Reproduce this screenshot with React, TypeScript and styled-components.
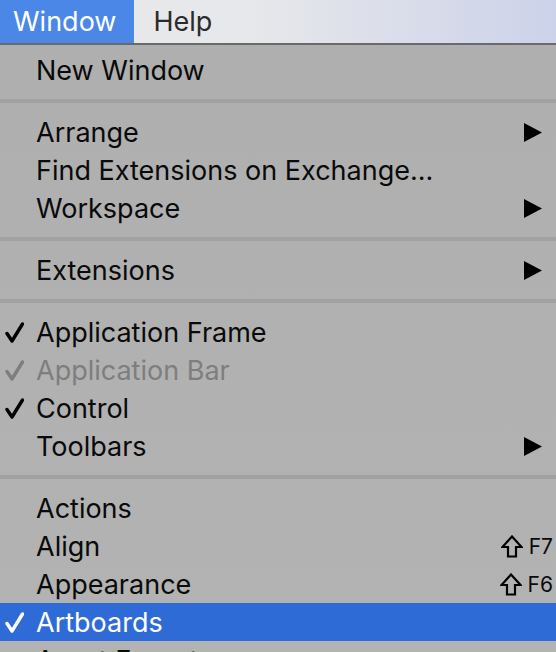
import React from "react";
import styled, { createGlobalStyle } from "styled-components";

const Global = createGlobalStyle`
  html, body { margin: 0; padding: 0; background: #b1b1b1; }
  body { font-family: Inter, "Noto Sans", "Liberation Sans", sans-serif; -webkit-font-smoothing: antialiased; }
`;

const Page = styled.div`
  width: 556px;
  height: 652px;
  overflow: hidden;
  background: #b1b1b1;
`;

const MenuBar = styled.div`
  display: flex;
  height: 43px;
  background: linear-gradient(to right, #e9e9eb 0%, #e7e8eb 45%, #ccd2e9 100%);
  border-bottom: 2px solid #6a6a6a;
`;

const BarItem = styled.div<{ $active?: boolean }>`
  display: flex;
  align-items: center;
  padding: 0 18px 0 19px;
  font-size: 27px;
  color: ${(p) => (p.$active ? "#ffffff" : "#2b2b2b")};
  background: ${(p) => (p.$active ? "#4a87e7" : "transparent")};
  &:first-child { padding-left: 13px; }
`;

const Menu = styled.div`
  display: flex;
  flex-direction: column;
  padding-top: 6px;
  background: linear-gradient(to bottom, #afafaf, #b3b3b3);
`;

const Row = styled.div<{ $selected?: boolean; $disabled?: boolean }>`
  display: grid;
  grid-template-columns: 36px 1fr auto;
  align-items: center;
  height: 38px;
  padding-right: 3px;
  font-size: 27px;
  color: ${(p) => (p.$selected ? "#ffffff" : p.$disabled ? "#7e7e7e" : "#0a0a0a")};
  background: ${(p) => (p.$selected ? "#2e6bd6" : "transparent")};
  white-space: nowrap;
`;

const CheckCell = styled.div`
  display: flex;
  align-items: center;
  justify-content: flex-start;
  padding-left: 5px;
`;

const Label = styled.span``;

const Separator = styled.div`
  height: 4px;
  margin: 10px 0;
  background: #a1a1a1;
`;

const Accessory = styled.div`
  display: flex;
  align-items: center;
  gap: 6px;
  font-size: 21px;
`;

const SubArrow = styled.svg`
  margin-right: 11px;
`;

const Check = ({ color }: { color: string }) => (
  <svg width="19" height="21" viewBox="0 0 19 21">
    <path
      d="M2 11.5 L7 19 L17.5 2"
      fill="none"
      stroke={color}
      strokeWidth="3.4"
      strokeLinecap="round"
      strokeLinejoin="round"
    />
  </svg>
);

const Shift = () => (
  <svg width="22" height="23" viewBox="0 0 22 23">
    <path
      d="M11 1.5 L20.5 12 L15 12 L15 21.5 L7 21.5 L7 12 L1.5 12 Z"
      fill="none"
      stroke="#000"
      strokeWidth="2.2"
      strokeLinejoin="miter"
    />
  </svg>
);

type Item =
  | { sep: true }
  | {
      sep?: false;
      label: string;
      checked?: boolean;
      disabled?: boolean;
      selected?: boolean;
      submenu?: boolean;
      shortcut?: string;
    };

const items: Item[] = [
  { label: "New Window" },
  { sep: true },
  { label: "Arrange", submenu: true },
  { label: "Find Extensions on Exchange..." },
  { label: "Workspace", submenu: true },
  { sep: true },
  { label: "Extensions", submenu: true },
  { sep: true },
  { label: "Application Frame", checked: true },
  { label: "Application Bar", checked: true, disabled: true },
  { label: "Control", checked: true },
  { label: "Toolbars", submenu: true },
  { sep: true },
  { label: "Actions" },
  { label: "Align", shortcut: "F7" },
  { label: "Appearance", shortcut: "F6" },
  { label: "Artboards", checked: true, selected: true },
  { label: "Asset Export" },
];

export default function App() {
  return (
    <Page>
      <Global />
      <MenuBar>
        <BarItem $active>Window</BarItem>
        <BarItem>Help</BarItem>
      </MenuBar>
      <Menu>
        {items.map((it, i) => {
          if (it.sep) return <Separator key={i} />;
          const color = it.selected ? "#ffffff" : it.disabled ? "#7e7e7e" : "#000000";
          return (
            <Row key={i} $selected={it.selected} $disabled={it.disabled}>
              <CheckCell>{it.checked && <Check color={color} />}</CheckCell>
              <Label>{it.label}</Label>
              <Accessory>
                {it.submenu && (
                  <SubArrow width="18" height="19" viewBox="0 0 18 19">
                    <path d="M0 0 L18 9.5 L0 19 Z" fill="#000" />
                  </SubArrow>
                )}
                {it.shortcut && (
                  <>
                    <Shift />
                    <span>{it.shortcut}</span>
                  </>
                )}
              </Accessory>
            </Row>
          );
        })}
      </Menu>
    </Page>
  );
}
